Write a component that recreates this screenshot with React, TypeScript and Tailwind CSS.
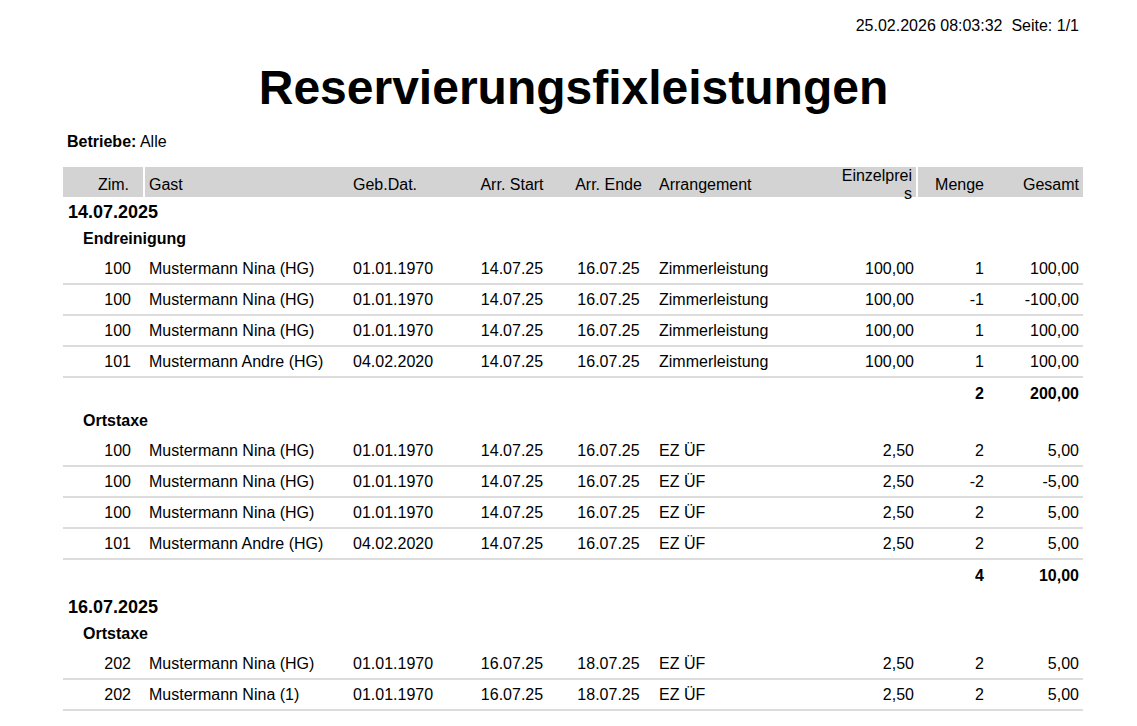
import React from "react";

type Row = { zim: string; gast: string; geb: string; start: string; ende: string; arr: string; preis: string; menge: string; gesamt: string };

interface Group {
  name: string;
  rows: Row[];
  total?: { menge: string; gesamt: string };
}

const cols = "grid grid-cols-[82px_204px_113px_100px_93px_180px_83px_70px_95px]";

const r = (zim: string, gast: string, geb: string, start: string, ende: string, arr: string, preis: string, menge: string, gesamt: string): Row => ({ zim, gast, geb, start, ende, arr, preis, menge, gesamt });

const days: { date: string; groups: Group[] }[] = [
  {
    date: "14.07.2025",
    groups: [
      {
        name: "Endreinigung",
        rows: [
          r("100", "Mustermann Nina (HG)", "01.01.1970", "14.07.25", "16.07.25", "Zimmerleistung", "100,00", "1", "100,00"),
          r("100", "Mustermann Nina (HG)", "01.01.1970", "14.07.25", "16.07.25", "Zimmerleistung", "100,00", "-1", "-100,00"),
          r("100", "Mustermann Nina (HG)", "01.01.1970", "14.07.25", "16.07.25", "Zimmerleistung", "100,00", "1", "100,00"),
          r("101", "Mustermann Andre (HG)", "04.02.2020", "14.07.25", "16.07.25", "Zimmerleistung", "100,00", "1", "100,00"),
        ],
        total: { menge: "2", gesamt: "200,00" },
      },
      {
        name: "Ortstaxe",
        rows: [
          r("100", "Mustermann Nina (HG)", "01.01.1970", "14.07.25", "16.07.25", "EZ ÜF", "2,50", "2", "5,00"),
          r("100", "Mustermann Nina (HG)", "01.01.1970", "14.07.25", "16.07.25", "EZ ÜF", "2,50", "-2", "-5,00"),
          r("100", "Mustermann Nina (HG)", "01.01.1970", "14.07.25", "16.07.25", "EZ ÜF", "2,50", "2", "5,00"),
          r("101", "Mustermann Andre (HG)", "04.02.2020", "14.07.25", "16.07.25", "EZ ÜF", "2,50", "2", "5,00"),
        ],
        total: { menge: "4", gesamt: "10,00" },
      },
    ],
  },
  {
    date: "16.07.2025",
    groups: [
      {
        name: "Ortstaxe",
        rows: [
          r("202", "Mustermann Nina (HG)", "01.01.1970", "16.07.25", "18.07.25", "EZ ÜF", "2,50", "2", "5,00"),
          r("202", "Mustermann Nina (1)", "01.01.1970", "16.07.25", "18.07.25", "EZ ÜF", "2,50", "2", "5,00"),
        ],
      },
    ],
  },
];

const DataRow = ({ row }: { row: Row }) => (
  <div className={`${cols} items-center min-h-[31px] border-b-2 border-[#dcdcdc] leading-[18px] py-[3px]`}>
    <div className="text-right pr-[14px]">{row.zim}</div>
    <div className="px-1">{row.gast}</div>
    <div className="px-1">{row.geb}</div>
    <div className="px-1 text-center">{row.start}</div>
    <div className="px-1 text-center">{row.ende}</div>
    <div className="px-1">{row.arr}</div>
    <div className="px-1 text-right">{row.preis}</div>
    <div className="px-1 text-right">{row.menge}</div>
    <div className="px-1 text-right">{row.gesamt}</div>
  </div>
);

export default function App() {
  return (
    <div className="min-h-screen bg-white text-black text-[16px]" style={{ fontFamily: '"Liberation Sans", Arial, sans-serif' }}>
      <div className="w-[1137px] pt-[16px]">
        <div className="text-right pr-[58px] leading-[20px]">25.02.2026 08:03:32&nbsp;&nbsp;Seite: 1/1</div>
        <h1 className="text-center font-bold text-[48px] leading-[56px] mt-[24px] pl-[10px]">Reservierungsfixleistungen</h1>
        <div className="ml-[67px] mt-[16px] leading-[20px]">
          <span className="font-bold">Betriebe:</span> Alle
        </div>
        <div className="ml-[63px] w-[1020px] mt-[15px]">
          <div className={`${cols} h-[30px] items-center bg-[#d3d3d3]`}>
            <div className="text-right pr-[14px] border-r-2 border-white h-full flex items-center justify-end">Zim.</div>
            <div className="px-1">Gast</div>
            <div className="px-1">Geb.Dat.</div>
            <div className="px-1 text-center">Arr. Start</div>
            <div className="px-1 text-center">Arr. Ende</div>
            <div className="px-1">Arrangement</div>
            <div className="px-1 text-right break-all leading-[18px] border-r-2 border-white h-full flex items-center justify-end">Einzelpreis</div>
            <div className="px-1 text-right">Menge</div>
            <div className="px-1 text-right">Gesamt</div>
          </div>
          {days.map((d, i) => (
            <div key={i}>
              <div className="font-bold text-[18px] leading-[22px] pl-[5px] pt-[4px] pb-[5px]">{d.date}</div>
              {d.groups.map((g, j) => (
                <div key={j}>
                  <div className="font-bold pl-[20px] leading-[20px] pt-[1px] pb-[5px]">{g.name}</div>
                  {g.rows.map((row, k) => (
                    <DataRow key={k} row={row} />
                  ))}
                  {g.total && (
                    <div className={`${cols} h-[32px] items-center font-bold`}>
                      <div className="col-span-7" />
                      <div className="px-1 text-right">{g.total.menge}</div>
                      <div className="px-1 text-right">{g.total.gesamt}</div>
                    </div>
                  )}
                </div>
              ))}
            </div>
          ))}
        </div>
      </div>
    </div>
  );
}
